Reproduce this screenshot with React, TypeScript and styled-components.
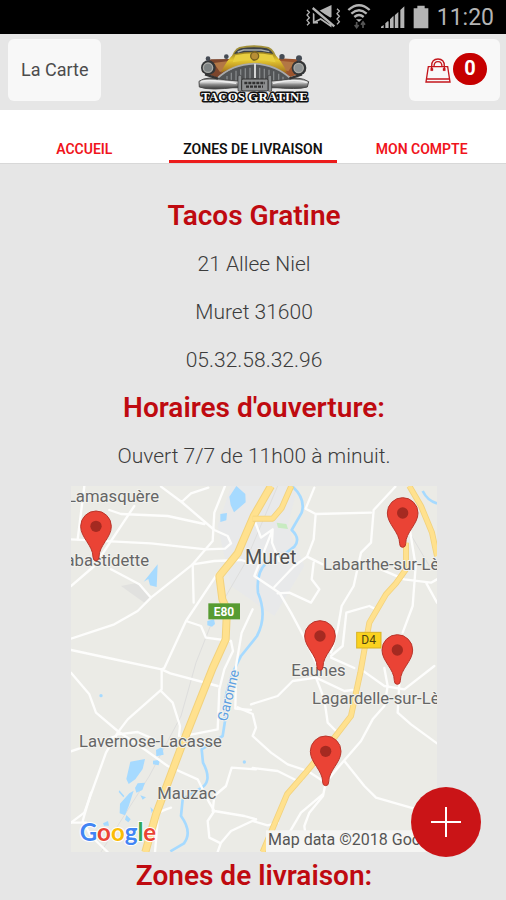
import React from "react";
import styled, { createGlobalStyle } from "styled-components";

const GlobalStyle = createGlobalStyle`
  *, *::before, *::after { box-sizing: border-box; }
  body {
    margin: 0;
    background: #e6e6e6;
    font-family: Roboto, "Liberation Sans", sans-serif;
    color: #333;
  }
`;

const StatusBar = styled.div`
  display: flex;
  align-items: center;
  justify-content: flex-end;
  gap: 8px;
  height: 34px;
  padding-right: 12px;
  background: #000;
  color: #b4b4b4;
`;

const StatusIcon = styled.svg<{ $width: number }>`
  display: block;
  width: ${(p) => p.$width}px;
  height: 26px;
  overflow: visible;
`;

const Clock = styled.time`
  font-size: 23px;
  line-height: 34px;
  padding-top: 2px;
`;

const Header = styled.header`
  display: grid;
  grid-template-columns: 1fr auto 1fr;
  align-items: center;
  height: 76px;
  padding: 0 6px 0 8px;
  background: #e6e6e6;
`;

const HeaderButton = styled.button<{ $align: "start" | "end" }>`
  display: flex;
  align-items: center;
  justify-content: center;
  justify-self: ${(p) => p.$align};
  height: 62px;
  margin-bottom: 4px;
  padding: 0 13px;
  border: 0;
  border-radius: 6px;
  background: #f8f8f8;
  color: #4c4c4c;
  font: 400 18px/24px Roboto, "Liberation Sans", sans-serif;
  cursor: pointer;
`;

const BagIcon = styled.svg`
  width: 26px;
  height: 28px;
  margin: 2px 2px 0 3px;
`;

const Badge = styled.span`
  width: 34px;
  height: 32px;
  margin-bottom: 2px;
  border-radius: 16px;
  background: #c60000;
  color: #fff;
  font-size: 20px;
  font-weight: 700;
  line-height: 30px;
  text-align: center;
`;

const Logo = styled.svg`
  display: block;
  width: 118px;
  height: 62px;
  margin-top: 4px;
`;

const Tabs = styled.nav`
  display: grid;
  grid-template-columns: repeat(3, 1fr);
  height: 54px;
  background: #fff;
  border-bottom: 1px solid #d8d8d8;
`;

const Tab = styled.a<{ $active?: boolean }>`
  display: flex;
  align-items: flex-end;
  justify-content: center;
  padding-bottom: 3px;
  border-bottom: 3px solid ${(p) => (p.$active ? "#ec1c1c" : "transparent")};
  color: ${(p) => (p.$active ? "#111" : "#f0141c")};
  font-size: 14px;
  font-weight: 600;
  line-height: 16px;
  text-decoration: none;
  white-space: nowrap;
`;

const Content = styled.main`
  padding: 28px 69px 0 71px;
  text-align: center;
`;

const Title = styled.h2`
  margin: 0;
  color: #bf0a10;
  font-size: 28px;
  font-weight: 600;
  line-height: 48px;
`;

const Line = styled.p`
  margin: 0;
  color: #3c3c3c;
  font-size: 21px;
  font-weight: 300;
  line-height: 48px;
`;

const MapDrawing = styled.svg`
  display: block;
  width: 100%;
  margin-top: 6px;
  font-family: Roboto, sans-serif;
`;

const AddButton = styled.button`
  position: fixed;
  right: 25px;
  bottom: 43px;
  display: grid;
  place-items: center;
  width: 70px;
  height: 70px;
  padding: 0;
  border: 0;
  border-radius: 50%;
  background: #ca1417;
  cursor: pointer;
`;

const MuteIcon = () => (
  <StatusIcon $width={34} viewBox="51 12 102 78" fill="none" stroke="currentColor">
    <path d="M77 37h13l38-18v32M77 37v31h13" strokeWidth="5" />
    <path d="M96 34l32-15v34z" fill="currentColor" stroke="none" />
    <path d="M74 26l64 52" stroke="#000" strokeWidth="18" />
    <path d="M74 24l65 55" strokeWidth="7" />
    <path d="M76 68l22-11 30 21v-8" strokeWidth="5" />
    <path d="M57 30l7 7-7 8 7 8-7 8 7 8-7 7M147 26l7 7-7 8 7 8-7 8 7 8-7 8" strokeWidth="4" />
  </StatusIcon>
);

const WifiIcon = () => (
  <StatusIcon $width={24} viewBox="174 12 72 78" fill="none" stroke="currentColor" strokeWidth="7">
    <path d="M178 30Q210 1 242 30M187 41Q210 21 233 41M196 51Q210 39 224 51" />
    <path d="M201 58h18l-9 8z" fill="currentColor" stroke="none" />
    <path d="M203 66v16m-6-7l6 8 6-8M222 84V66m-6 8l6-8 6 8" stroke="#555" strokeWidth="5" />
  </StatusIcon>
);

const SignalIcon = () => (
  <StatusIcon $width={26} viewBox="270 12 78 78" fill="currentColor">
    <path d="M276 84v-4l8-5v9zM289 84V70l8-7v21zM303 84V58l9-9v35zM318 84V45l10-9v48zM334 84V30l12-11v65z" />
    <path d="M296 66l4-3v21h-4zM312 50l4-4v38h-4z" opacity=".6" />
  </StatusIcon>
);

const BatteryIcon = () => (
  <StatusIcon $width={16} viewBox="371 12 48 78" fill="currentColor">
    <path d="M384 17h22v8h11v60h-44V25h11z" />
  </StatusIcon>
);

const CarLogo = () => (
  <Logo viewBox="44 22 354 186" role="img" aria-label="Tacos Gratine">
    <defs>
      <linearGradient id="chrome" x1="0" y1="0" x2="0" y2="1">
        <stop offset="0" stopColor="#555" />
        <stop offset=".35" stopColor="#dedede" />
        <stop offset=".6" stopColor="#8a8a8a" />
        <stop offset="1" stopColor="#333" />
      </linearGradient>
      <linearGradient id="paint" x1="0" y1="0" x2="0" y2="1">
        <stop offset="0" stopColor="#927a20" />
        <stop offset=".4" stopColor="#e6c931" />
        <stop offset="1" stopColor="#a06f1c" />
      </linearGradient>
    </defs>
    <path d="M147 84Q158 40 177 34Q220 24 265 34Q285 42 294 82z" fill="#a3913a" />
    <path d="M160 57Q170 40 183 38Q220 32 259 38Q273 43 279 56Q220 43 160 57z" fill="#3b4047" />
    <path d="M172 49l18-6h52l25 5" fill="none" stroke="#a9afb0" strokeWidth="4" />
    <path d="M65 109Q64 78 92 71L147 70L155 98L110 126z" fill="#7c452c" />
    <path d="M375 108Q378 77 350 71L296 68L286 98L330 124z" fill="#9c542e" />
    <path d="M100 82l45-6 4 21-30 12zM342 80l-45-5-7 22 34 10z" fill="#b37745" />
    <path d="M121 111Q143 67 162 55Q220 42 280 55Q303 71 320 112Q220 71 121 111z" fill="url(#paint)" />
    <path d="M165 59Q220 46 277 59L286 80Q220 66 157 80z" fill="#e8cf40" />
    <path d="M220 50v25" stroke="#777036" strokeWidth="6" />
    <circle cx="223" cy="61" r="12" fill="#b88e35" stroke="#796322" strokeWidth="4" />
    <path d="M112 127Q160 86 222 83Q286 86 329 127L320 158H126z" fill="#525456" />
    <path d="M109 130Q154 86 222 84Q290 88 332 130" fill="none" stroke="#aaabab" strokeWidth="5" />
    <path d="M140 121V145M153 111v36M167 105v42M181 101v46M195 98v49M209 96v50M238 96v50M252 99v47M266 102v45M280 107v40M295 114v32M308 123v22" stroke="#85888a" strokeWidth="4" />
    <path d="M224 84v43" stroke="#efefef" strokeWidth="5" />
    <path d="M56 137Q80 120 132 132L172 136H274L314 132Q356 120 385 138L381 154Q350 163 275 154H169Q92 166 57 154z" fill="url(#chrome)" stroke="#4a4a4a" strokeWidth="3" />
    <path d="M62 137Q90 130 167 143M278 143Q344 127 379 140" fill="none" stroke="#eee" strokeWidth="4" />
    <rect x="173" y="119" width="11" height="48" rx="4" fill="#8b8e90" stroke="#333" strokeWidth="2" />
    <rect x="263" y="119" width="11" height="48" rx="4" fill="#8b8e90" stroke="#333" strokeWidth="2" />
    <rect x="184" y="130" width="79" height="36" rx="4" fill="#8d8f90" stroke="#303030" strokeWidth="3" />
    <path d="M192 142h62M197 153h51" stroke="#303030" strokeWidth="7" strokeDasharray="9 3" />
    <circle cx="84" cy="96" r="22" fill="#343638" />
    <circle cx="83" cy="96" r="14" fill="#7d8283" stroke="#a9aaa6" strokeWidth="4" />
    <circle cx="356" cy="97" r="22" fill="#343638" />
    <circle cx="355" cy="97" r="14" fill="#8e9293" stroke="#adada8" strokeWidth="4" />
    <g fill="#454b54">
      <circle cx="83" cy="69" r="7" /><circle cx="138" cy="63" r="7" />
      <circle cx="305" cy="63" r="8" /><circle cx="356" cy="68" r="9" />
    </g>
    <path d="M74 116l39 13M365 116l-38 13" stroke="#333" strokeWidth="7" />
    <text x="223" y="196" textAnchor="middle" fontFamily="'Liberation Serif', serif" fontSize="39" fontWeight="700" fill="#fff" stroke="#111" strokeWidth="9" strokeLinejoin="round" paintOrder="stroke">TACOS GRATINE</text>
  </Logo>
);

const pins = [
  [75, 121],
  [995, 81],
  [747, 450],
  [979, 492],
  [764, 796],
];

const places = [
  { name: "Lamasquère", x: 264, y: 49, anchor: "end" },
  { name: "Labastidette", x: 234, y: 240, anchor: "end" },
  { name: "Labarthe-sur-Lèze", x: 756, y: 252, anchor: "start" },
  { name: "Eaunes", x: 661, y: 570, anchor: "start" },
  { name: "Lagardelle-sur-Lèze", x: 723, y: 654, anchor: "start" },
  { name: "Lavernose-Lacasse", x: 24, y: 783, anchor: "start" },
  { name: "Mauzac", x: 259, y: 939, anchor: "start" },
] as const;

const DeliveryMap = () => (
  <MapDrawing viewBox="0 0 1098 1098" role="img" aria-label="Carte des zones de livraison">
    <rect width="1098" height="1098" fill="#ebebe6" />
    <path d="M480 0H680L650 120 700 240 610 390 480 300 440 120z" fill="#e8e9ea" />
    <path d="M150 300l50-10 40 45-20 15z" fill="#e1e1df" />
    <g fill="none" stroke="#dededd" strokeWidth="3">
      <path d="M620 0L520 235 430 390 375 530 330 690 235 870 90 1098M1010 130L1075 240" />
    </g>
    <g fill="#a6daff">
      <path d="M496 0l27 24 1 25-35 30-10-22-4-25zM448 84l20-3-2 22-18 5zM218 287l42-52-3 68-20-5-5-19z" />
      <path d="M409 405l20-5 3 14-9 8-14-4z" />
      <path d="M255 792l19-10 4 24-22 5zM246 824l21-3-4 17-17-3zM178 827l44-8-7 30-22 31-20 14-7-15zM200 892l22-2-8 22-18 8-4-14zM145 913l15 17-3 4-14-16zM147 953l28-31 13-8-15 47-11 27-16-6zM166 987l13 13-7 9-10-8zM208 928l17 6-10 7zM238 963l9 9-5 9zM96 1012l15-7 3 14h-15z" />
      <circle cx="90" cy="629" r="5" /><circle cx="520" cy="828" r="5" />
    </g>
    <path d="M617 110l29 4 5 15-30-4z" fill="#c8ebc1" />
    <g fill="none" stroke="#a6daff" strokeLinejoin="round">
      <path d="M663 0Q705 38 692 80L662 132Q690 158 670 182L640 205 585 232Q555 260 561 320Q590 390 558 450L510 510 489 552Q452 640 462 705L455 750 392 790 396 830Q428 890 384 910L335 940 330 990Q365 1038 339 1072L298 1096" strokeWidth="8" />
      <path d="M1055 15Q1070 45 1098 52" strokeWidth="8" />
    </g>
    <g fill="none" stroke="#fdfdfc" strokeWidth="7" strokeLinejoin="round" strokeLinecap="round">
      <path d="M270 2L332 48 430 132 470 150 480 172 462 188 405 190 240 172 0 160M115 72L150 84 290 90 400 114M332 48L360 22 412 5" />
      <path d="M190 60L70 240 0 300M40 0L20 160M120 250L205 295 240 335M0 458L130 415 200 375 240 335 365 235 425 165 430 80 462 0" />
      <path d="M0 492L140 522 272 550 280 546 345 405 440 262M365 235L368 350M345 405L390 420 405 455 480 465 486 495 460 550 445 610 440 730 330 752" />
      <path d="M365 235L430 225 510 222 545 232M545 370L512 440 495 540 493 668 540 672" />
      <path d="M730 5L704 68 734 84 900 80M973 2L908 72 900 170 870 200 848 300 812 360 800 430 780 500M734 84L728 160 708 212 670 240 610 303" />
      <path d="M553 110L570 155 605 130 603 170 625 225M605 130L550 270 625 320 660 380 700 455 747 555M708 212L755 235M728 230l-6 50 23 30-25 40-65-30-35 2" />
      <path d="M930 250L1000 280 1080 290 1098 280M1010 90L1034 240 1025 360 995 440M1065 290l33 60" />
      <path d="M780 510L815 480 826 380 895 360 915 370M780 515L850 546" />
      <path d="M0 560L55 625 75 680 140 735 220 790 290 840 380 880 415 950 430 975 520 990 555 1000" />
      <path d="M272 550L272 610 170 700 140 740 105 800 40 980 0 1010M272 550L298 562 440 600M270 615L305 650 327 720 324 750" />
      <path d="M135 750L0 796M140 745L200 738 250 760M60 920L35 1005 60 1050 110 1098M0 1010h45" />
      <path d="M540 655L620 630 665 585 735 575 820 615 845 612M735 575L760 640 770 710 795 735M870 550L940 600 1000 610 1090 540" />
      <path d="M500 664L545 684 555 725 545 750 600 800 650 835 710 855 764 890M545 846L620 855 680 885 695 880" />
      <path d="M820 825L880 900 915 935 1030 968M764 890L800 846 870 765 905 700 940 660 950 600 940 546M985 590L980 680 1020 715 1098 772" />
      <path d="M764 890L756 930 715 980 700 1020 710 1098M755 925L690 980 655 1040M545 1005L590 1018 620 1010M555 1000L480 1035 450 1070 440 1098M430 975L410 1005 415 1055 445 1070" />
      <path d="M555 850L482 845 465 900 430 930 425 975M300 965L285 970 262 980 252 1098" />
    </g>
    <g fill="none" strokeLinejoin="round">
      <path d="M600 0L548 90 500 202 445 270 454 340 468 370 464 460 425 546 330 785 255 985 223 1098" stroke="#f2d27d" strokeWidth="24" />
      <path d="M600 0L548 90 500 202 445 270 454 340 468 370 464 460 425 546 330 785 255 985 223 1098" stroke="#ffe18e" strokeWidth="18" />
      <path d="M661 0L632 66 605 98H545M1015 0L1050 60 1083 140 1098 210M1005 170L1005 250 975 292 945 325 895 410 884 470 868 560 840 690 790 755 706 858 648 925 575 1098" stroke="#f2d27d" strokeWidth="18" />
      <path d="M661 0L632 66 605 98H545M1015 0L1050 60 1083 140 1098 210M1005 170L1005 250 975 292 945 325 895 410 884 470 868 560 840 690 790 755 706 858 648 925 575 1098" stroke="#ffe18e" strokeWidth="13" />
    </g>
    <rect x="412" y="352" width="95" height="48" fill="#579b32" />
    <text x="459" y="389" textAnchor="middle" fontSize="36" fontWeight="700" fill="#fff">E80</text>
    <rect x="857" y="439" width="73" height="47" fill="#fad21f" stroke="#d9b326" strokeWidth="3" />
    <text x="893" y="475" textAnchor="middle" fontSize="36" fill="#4d4310">D4</text>
    <g fontSize="50" fill="#666" stroke="#f2f2ee" strokeWidth="6" paintOrder="stroke" strokeLinejoin="round">
      {places.map((p) => (
        <text key={p.name} x={p.x} y={p.y} textAnchor={p.anchor}>{p.name}</text>
      ))}
      <text x="522" y="235" fontSize="59" fill="#505050">Muret</text>
      <text x="467" y="708" fontSize="42" fill="#5c9fe2" transform="rotate(-76 467 708)">Garonne</text>
    </g>
    {pins.map(([x, y]) => (
      <g key={`${x}-${y}`} transform={`translate(${x} ${y})`}>
        <path d="M0-46A46 46 0 0 1 46 0C46 34 9 57 9 92Q9 103 0 103Q-9 103-9 92C-9 57-46 34-46 0A46 46 0 0 1 0-46z" fill="#ea4335" stroke="#b9352b" strokeWidth="3" />
        <circle r="17" fill="#a52a21" />
      </g>
    ))}
    <rect x="585" y="1033" width="513" height="65" fill="#f5f5f3" />
    <text x="591" y="1078" fontSize="48" fill="#555">Map data ©2018 Google</text>
    <text x="26" y="1066" fontFamily="Lato, sans-serif" fontSize="72" fontWeight="700" stroke="#fff" strokeWidth="6" paintOrder="stroke">
      <tspan fill="#4285f4">G</tspan><tspan fill="#ea4335">o</tspan><tspan fill="#fbbc05">o</tspan><tspan fill="#4285f4">g</tspan><tspan fill="#34a853">l</tspan><tspan fill="#ea4335">e</tspan>
    </text>
  </MapDrawing>
);

export default function App() {
  return (
    <>
      <GlobalStyle />
      <StatusBar>
        <MuteIcon />
        <WifiIcon />
        <SignalIcon />
        <BatteryIcon />
        <Clock>11:20</Clock>
      </StatusBar>
      <Header>
        <HeaderButton $align="start">La Carte</HeaderButton>
        <CarLogo />
        <HeaderButton $align="end" aria-label="Panier, 0 article">
          <BagIcon viewBox="0 0 78 84" fill="none" stroke="#c4161c" strokeWidth="4">
            <path d="M10 29h58l7 46H3zM5 66h68" />
            <path d="M20 40V27Q20 6 39 6T58 27V40M27 29Q27 14 39 14T51 29" />
            <path d="M17 34h7v7h-7zM54 34h7v7h-7z" fill="#c4161c" strokeWidth="1" />
          </BagIcon>
          <Badge>0</Badge>
        </HeaderButton>
      </Header>
      <Tabs>
        <Tab href="#accueil">ACCUEIL</Tab>
        <Tab href="#zones" $active aria-current="page">ZONES DE LIVRAISON</Tab>
        <Tab href="#compte">MON COMPTE</Tab>
      </Tabs>
      <Content>
        <Title>Tacos Gratine</Title>
        <Line>21 Allee Niel</Line>
        <Line>Muret 31600</Line>
        <Line>05.32.58.32.96</Line>
        <Title>Horaires d'ouverture:</Title>
        <Line>Ouvert 7/7 de 11h00 à minuit.</Line>
        <DeliveryMap />
        <Title>Zones de livraison:</Title>
      </Content>
      <AddButton aria-label="Ajouter">
        <svg width="30" height="30" viewBox="0 0 30 30" stroke="#fff" strokeWidth="2" aria-hidden="true">
          <path d="M15 0v30M0 15h30" />
        </svg>
      </AddButton>
    </>
  );
}
